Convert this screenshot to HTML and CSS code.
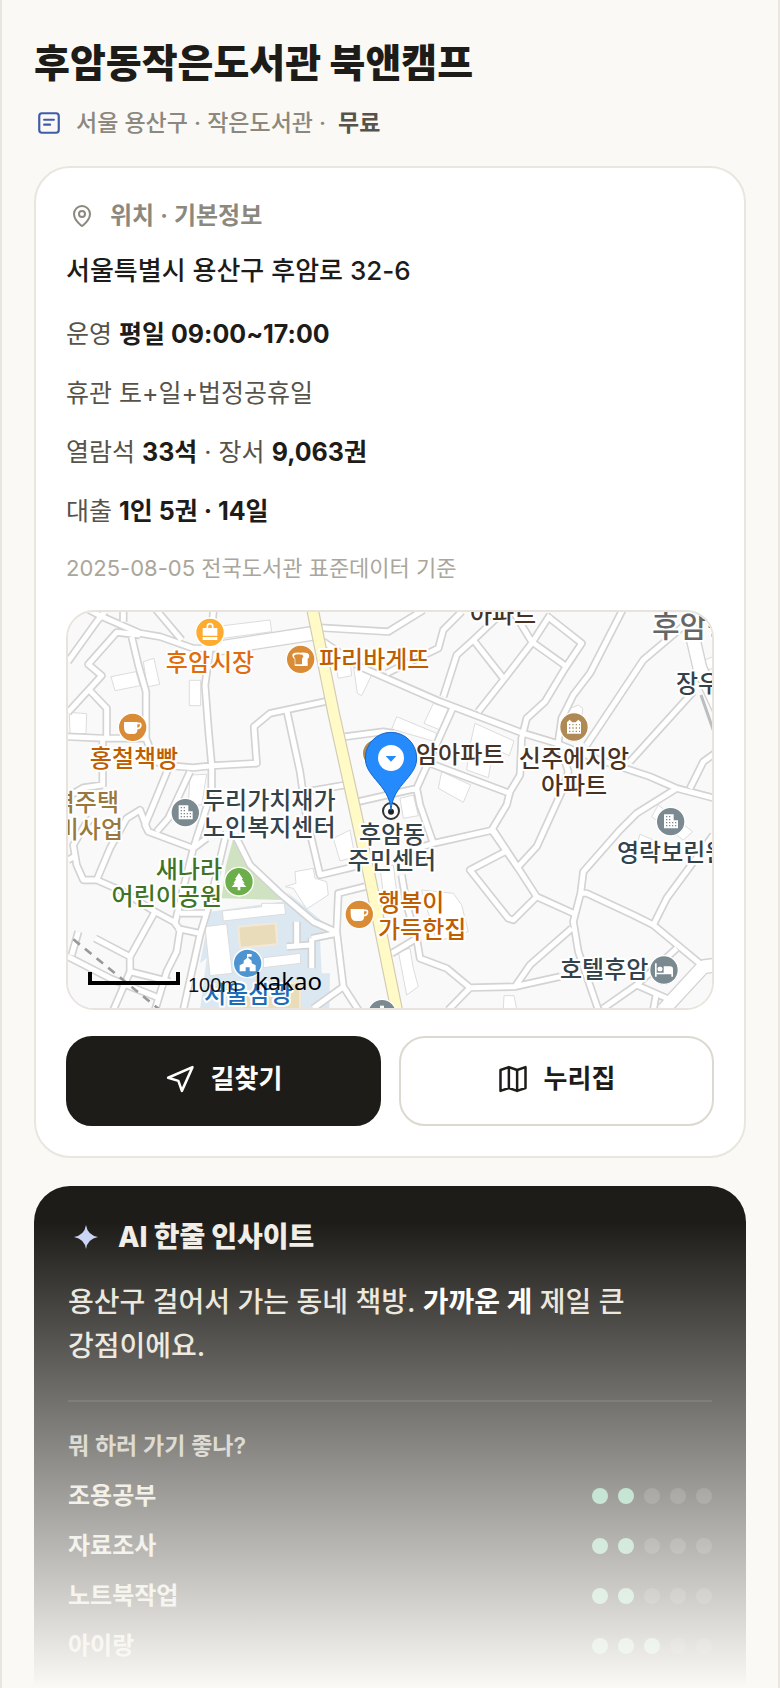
FILE: index.html
```html
<!DOCTYPE html>
<html lang="ko">
  <head>
    <meta charset="UTF-8" />
    <meta name="viewport" content="width=device-width, initial-scale=1.0" />
    <title>후암동작은도서관 북앤캠프</title>
    <link rel="stylesheet" href="styles.css">
  </head>
  <body>
    <main class="page">
      <header class="head">
        <h1 class="title">후암동작은도서관 북앤캠프</h1>
        <div class="meta">
          <span class="meta-icon">
            <svg width="26" height="26" viewBox="0 0 24 24" class="line-icon">
              <rect x="3" y="3" width="18" height="18" rx="2.5" />
              <path d="M7.500 9h9M7.500 13.500h5.500" />
            </svg>
          </span>
          <span>서울 용산구 · 작은도서관 ·</span>
          <b>무료</b>
        </div>
      </header>

      <section class="card">
        <h2 class="card-title">
          <span class="card-icon">
            <svg width="24" height="24" viewBox="0 0 24 24" class="line-icon">
              <path d="M20 10c0 5-5.500 10.200-7.400 11.800a1 1 0 0 1-1.200 0C9.500 20.200 4 15 4 10a8 8 0 0 1 16 0z" />
              <circle cx="12" cy="10" r="3" />
            </svg>
          </span>
          위치 · 기본정보
        </h2>
        <p class="address">서울특별시 용산구 후암로 32-6</p>
        <div class="info">
          <p>운영 <b>평일 09:00~17:00</b></p>
          <p>휴관 토+일+법정공휴일</p>
          <p>열람석 <b>33석</b> · 장서 <b>9,063권</b></p>
          <p>대출 <b>1인 5권 · 14일</b></p>
          <p class="source">2025-08-05 전국도서관 표준데이터 기준</p>
        </div>

        <div class="map">
          <svg class="map-svg" viewBox="0 0 644 396" preserveAspectRatio="xMidYMid slice">
            <defs>
              <g id="roads">
                <path d="M24 170L110 50L135 20M60 0L120 32L240 85L300 95L400 130L470 130M240 90L170 82L85 178L125 212L24 322M88 255L140 310V400M190 20V50M285 10L365 105M460 20L450 130L435 240L445 370L455 480M215 95L235 180L258 260V400L285 470L330 482L400 488L455 482L590 475L582 365L630 325L795 290M24 395L130 400H258M128 400V545M24 575L70 548L128 540" />
                <path d="M325 490L280 600L255 660L265 680L400 730M390 500L325 640L290 680M455 482L455 560L400 730L370 850L345 955L360 975L350 1040L320 1100L285 1215M500 680L450 890L420 990L370 1215M440 700L400 730M95 640L75 660L40 720L50 780L70 825L110 825L190 860L285 920L350 955M24 765L42 755M110 825L150 730L200 640L240 615L265 680M285 920L210 1055V1100L160 1215M105 1000L210 1055M210 1100L330 1130M24 1055L150 1120L300 1180M55 980L35 1050M360 925H440M350 970L420 985" />
                <path d="M780 68L985 80L1090 15M1205 20L1150 75L1135 130L980 205M790 110L900 185L1140 290L1390 385L1490 415L1590 455L1770 515L1850 550L1965 580M1150 275L1190 150L1240 105L1335 15M1240 105L1330 220M1255 320L1330 225L1415 115L1470 30M1360 20L1415 110L1520 185M1460 32L1565 115L1515 190L1455 290L1400 340L1385 400L1380 510L1350 560L1340 600L1295 675M1350 565L1110 475M855 395L970 380L1000 385M895 590L1070 550L1180 305M1070 550L1080 600L1120 715L1300 675L1375 790M680 315L720 500L740 640L780 810L885 785M740 560L855 540" />
                <path d="M1690 10L1590 205L1540 270L1505 340L1495 410L1525 500L1505 560L1430 725L1375 785M1880 55L1750 165L1580 420M1900 260L1710 470M1890 550L1930 470L1965 445M1850 550L1730 625L1680 675L1570 800L1562 865L1540 950L1555 1040L1615 1215M1295 675L1375 790L1430 875L1540 925M1430 875L1360 945L1345 940L1230 795L1335 740M1562 865H1580L1720 930L1780 960L1925 1080M1780 960L1820 880L1960 690M1535 970L1410 1080L1365 1145L1230 1148L1160 1090L1080 1060L1070 1000L1040 900L1025 810M1365 1145L1500 1115M1630 1210L1730 1140L1850 1030M1730 1140L1820 1180M1780 1215L1790 1160M1230 1148L1165 1215M1040 740L1120 715" />
                <path d="M525 690L570 780L660 865L760 950L830 982M915 845L835 865L830 980L850 1145L895 1215M850 1145L760 1210M995 1045L1070 1000M710 950V1020M680 1025L750 1020M755 1000V1090M755 1000L830 985" />
              </g>
            </defs>

            <rect class="ground" width="644" height="396" />

            <!-- streets are kept in their own 3x grid -->
            <g transform="scale(0.33333) translate(-24 -21)">
              <path class="park" d="M520 700L665 885L485 880L498 780z" />
              <path class="school" d="M450 920L700 885L680 860L800 960L780 1000L785 1105H810L808 1215H420L440 1060L420 1075z" />
              <g class="building">
                <path d="M153 215L228 200L240 242L165 257zM250 170L282 160L299 238L262 246zM388 226H422V302H388zM28 322L80 326L78 386H30zM490 62L630 45L635 80L490 100zM390 510L440 508L425 600H385zM435 965L500 957L517 1105L450 1112zM487 918L605 905V895L673 895L677 927L490 948zM610 1058L722 1045V1075L610 1088z" />
                <path d="M825 170L870 165L875 212L835 220zM880 180L935 210L905 272L892 265zM1010 335L1130 385L1125 410L995 372zM1120 295L1165 310L1140 375L1092 355zM1245 355L1362 408L1348 452L1300 430L1285 518L1220 495L1230 420zM1145 500L1232 540L1210 592L1135 550zM1020 580L1060 570L1075 632L1030 640zM820 700L870 675L885 755L840 768zM705 800L760 790L765 820L800 830L805 870L740 912L700 850L675 845L708 835zM960 790L1000 780L1010 860L970 865zM1085 855L1180 865L1205 900L1225 980L1130 1010zM1015 1040L1050 1030L1060 1090L1075 1145L1040 1170zM1520 315L1555 300L1568 310L1565 350L1515 345zM1795 600L1898 680L1870 705L1775 635zM1740 688L1780 705L1770 740L1730 720zM1332 1172H1362L1370 1212H1330zM1920 170L1960 155V190L1935 195z" />
              </g>
              <path class="court" d="M535 965L647 955L652 1018L540 1028zM545 1160L720 1130V1215H545z" />
              <path class="edge wide" d="M470 130L790 80M1885 40L1920 190L1990 340M1810 1215L1930 1085L1970 1080" />
              <use href="#roads" class="edge" />
              <use href="#roads" class="lane" />
              <path class="lane wide" d="M470 130L790 80M1885 40L1920 190L1990 340M1810 1215L1930 1085L1970 1080" />
              <path class="under" d="M1923 270L1965 390" />
              <path class="rail" d="M40 1003L300 1215" />
              <path class="avenue-edge" d="M757 10L822 330L882 600L932 830L1010 1215" />
              <path class="avenue" d="M757 10L822 330L882 600L932 830L1010 1215" />

              <g class="poi">
                <g transform="translate(450 82)">
                  <circle r="43" fill="#ffab30" />
                  <path fill="#fff" d="M-22-13H22V10H-22zM-22 14H22V23H-22z" />
                  <path class="poi-line" d="M-8-12V-18A8 8 0 0 1 8-18V-12" />
                </g>
                <g transform="translate(218 367)">
                  <circle r="43" fill="#d98b35" />
                  <path fill="#fff" d="M-26-16H14V8Q14 20 2 20H-10Q-26 20-26-2z" />
                  <path class="poi-line" d="M12-12H20Q26-12 24-3Q22 4 12 4" />
                </g>
                <g transform="translate(722 163)">
                  <circle r="43" fill="#d98b35" />
                  <path fill="#fff" d="M-25-14Q-22-22 0-20Q26-22 26-10Q26-4 21-2V20H-18V-2Q-25-4-25-14z" />
                  <path fill="#d98b35" d="M-20-8Q-20-15-6-15Q8-15 8-8L4-2V15H-16V-2z" />
                </g>
                <g transform="translate(898 928)">
                  <circle r="43" fill="#d98b35" />
                  <path fill="#fff" d="M-26-16H14V8Q14 20 2 20H-10Q-26 20-26-2z" />
                  <path class="poi-line" d="M12-12H20Q26-12 24-3Q22 4 12 4" />
                </g>
                <g transform="translate(950 445)"><circle r="43" fill="#b08a54" /></g>
                <g transform="translate(1542 366)">
                  <circle r="43" fill="#b08a54" />
                  <path fill="#fff" d="M-21 20V-14L-13-22L-5-14H5L13-22L21-14V20z" />
                  <path stroke="#b08a54" stroke-width="4" stroke-dasharray="4 6" d="M-15-7H18M-15 3H18M-15 13H18" />
                </g>
                <g transform="translate(376 623)">
                  <circle r="43" fill="#7b8990" />
                  <path fill="#fff" d="M-20-22H9V-4H22V20H-20z" />
                  <path stroke="#7b8990" stroke-width="4" stroke-dasharray="4 5" d="M-14-15H4M-14-6H4M-14 3H18M-14 12H18" />
                </g>
                <g transform="translate(1832 650)">
                  <circle r="43" fill="#7b8990" />
                  <path fill="#fff" d="M-20-22H9V-4H22V20H-20z" />
                  <path stroke="#7b8990" stroke-width="4" stroke-dasharray="4 5" d="M-14-15H4M-14-6H4M-14 3H18M-14 12H18" />
                </g>
                <g transform="translate(537 830)">
                  <circle r="43" fill="#6cae4a" />
                  <path fill="#fff" d="M0-26L12-8H8L17 5H12L22 16H4V26H-4V16H-22L-12 5H-17L-8-8H-12z" />
                </g>
                <g transform="translate(563 1075)">
                  <circle r="43" fill="#4d94d0" />
                  <path fill="#fff" d="M-24 24V6L-12 0V-8L-2-16V-28H12V-20H2V-16L12-8V0L24 6V24H6V12H-6V24z" />
                </g>
                <g transform="translate(1812 1095)">
                  <circle r="43" fill="#7b8990" />
                  <path fill="#fff" d="M-27-20H-22V20H-27zM-22 8H27V20H22V13H-22z" />
                  <path fill="#fff" d="M-1-11H18Q27-11 27-3V10H-1z" />
                  <rect x="-19" y="-10" width="14" height="14" rx="5" fill="#fff" />
                </g>
                <g transform="translate(966 1226)">
                  <circle r="43" fill="#7b8990" />
                  <path fill="#fff" d="M-6-24H6V0H-6z" />
                </g>
              </g>
            </g>

            <g class="label">
              <g class="shop" text-anchor="middle">
                <text class="market" x="142" y="59">후암시장</text>
                <text x="66" y="155">홍철책빵</text>
              </g>
              <g class="shop">
                <text x="251" y="56">파리바게뜨</text>
                <text x="310" y="299">행복이</text>
                <text x="310" y="326">가득한집</text>
              </g>
              <g class="apart">
                <text x="435" y="11" text-anchor="middle">아파트</text>
                <text x="348" y="151">암아파트</text>
                <text x="506" y="155" text-anchor="middle">신주에지앙</text>
                <text x="506" y="182" text-anchor="middle">아파트</text>
              </g>
              <g class="estate" text-anchor="end">
                <text x="51" y="199">역주택</text>
                <text x="55" y="226">비사업</text>
              </g>
              <g class="place">
                <text x="608" y="80">장우</text>
                <text x="135" y="197">두리가치재가</text>
                <text x="135" y="224">노인복지센터</text>
                <text x="324" y="231" text-anchor="middle">후암동</text>
                <text x="324" y="257" text-anchor="middle">주민센터</text>
                <text x="549" y="249">영락보린원</text>
                <text x="492" y="366">호텔후암</text>
              </g>
              <text class="district" x="584" y="25">후암동</text>
              <g class="green" text-anchor="end">
                <text x="154" y="266">새나라</text>
                <text x="154" y="293">어린이공원</text>
              </g>
              <text class="blue" x="136" y="391">서울삼광</text>
            </g>

            <!-- marker -->
            <g transform="scale(0.33333) translate(969 -21)">
              <circle cy="618" r="24" fill="#fff" fill-opacity=".7" stroke="#333" stroke-width="6" />
              <circle cy="620" r="9" fill="#222" />
              <path fill="#258afc" stroke="#1767c8" stroke-width="3" d="M0 616C-3 575-22 552-46 524C-66 500-77 484-77 459A77 77 0 0 1 77 459C77 484 66 500 46 524C22 552 3 575 0 616z" />
              <circle cy="459" r="39" fill="#fff" />
              <path fill="#258afc" d="M-16 453H16L0 470z" />
            </g>

            <path class="scale" d="M22 360v11h88v-11" />
            <text class="scale-text" x="120" y="380">100m</text>
            <text class="kakao" x="187" y="378">kakao</text>
          </svg>
        </div>

        <div class="actions">
          <button type="button" class="btn btn-dark">
            <svg width="30" height="30" viewBox="0 0 24 24" class="line-icon">
              <path d="M22 2.500L2.500 11L10.700 13.500L13.500 21.500z" />
            </svg>
            길찾기
          </button>
          <button type="button" class="btn">
            <svg width="30" height="30" viewBox="0 0 24 24" class="line-icon">
              <path d="M2 4.800L8.700 2.500L15.300 4.800L22 2.500V19.200L15.300 21.500L8.700 19.200L2 21.500zM8.700 2.500V19.200M15.300 4.800V21.500" />
            </svg>
            누리집
          </button>
        </div>
      </section>

      <section class="insight">
        <h2 class="insight-title">
          <span class="spark">
            <svg width="24" height="24" viewBox="0 0 24 24">
              <path d="M12 0Q13.500 10 24 12Q13.500 14 12 24Q10.500 14 0 12Q10.500 10 12 0z" />
            </svg>
          </span>
          AI 한줄 인사이트
        </h2>
        <p class="insight-text">용산구 걸어서 가는 동네 책방. <b>가까운 게</b> 제일 큰 강점이에요.</p>
        <div class="scores">
          <h3 class="scores-title">뭐 하러 가기 좋나?</h3>
          <ul class="list">
            <li class="row">조용공부
              <span class="dots"><i class="on"></i><i class="on"></i><i></i><i></i><i></i></span>
            </li>
            <li class="row">자료조사
              <span class="dots"><i class="on"></i><i class="on"></i><i></i><i></i><i></i></span>
            </li>
            <li class="row">노트북작업
              <span class="dots"><i class="on"></i><i class="on"></i><i></i><i></i><i></i></span>
            </li>
            <li class="row">아이랑
              <span class="dots"><i class="on"></i><i class="on"></i><i class="on"></i><i></i><i></i></span>
            </li>
          </ul>
        </div>
      </section>
      <div class="fade"></div>
    </main>
  </body>
</html>
```

FILE: styles.css
```css
* {
  margin: 0;
  padding: 0;
  box-sizing: border-box;
}
body {
  background: #faf9f5;
  color: #1e1c18;
  font-family: Inter, "Noto Sans CJK KR", sans-serif;
  font-size: 24px;
}
.page {
  position: relative;
  min-height: 100vh;
  padding: 38px 32px 0;
  border: solid #e8e6df;
  border-width: 0 2px;
}
.line-icon {
  fill: none;
  stroke: currentColor;
  stroke-width: 2;
  stroke-linecap: round;
  stroke-linejoin: round;
}

.title {
  font-size: 39px;
  font-weight: 800;
  line-height: 50px;
}
.meta {
  display: flex;
  align-items: center;
  gap: 12px;
  margin-top: 17px;
  font-size: 23px;
  font-weight: 500;
  line-height: 36px;
  color: #8c887e;
}
.meta b {
  font-weight: 600;
  color: #57534a;
}
.meta-icon,
.card-icon,
.spark {
  display: flex;
  justify-content: center;
  width: 30px;
}
.meta-icon {
  color: #3f5cab;
}

.card {
  margin-top: 25px;
  padding: 30px;
  border: 2px solid #e8e6df;
  border-radius: 36px;
  background: #fff;
}
.card-title {
  display: flex;
  align-items: center;
  gap: 12px;
  font-size: 24px;
  font-weight: 600;
  line-height: 36px;
  color: #8c887e;
}
.card-icon {
  width: 32px;
}
.address {
  margin-top: 16px;
  font-size: 26px;
  font-weight: 500;
  line-height: 42px;
}
.info {
  display: flex;
  flex-direction: column;
  gap: 18px;
  margin-top: 22px;
  font-size: 25px;
  line-height: 41px;
  color: #57534a;
}
.info b {
  font-weight: 700;
  color: #1e1c18;
}
.info .source {
  font-size: 22px;
  line-height: 36px;
  color: #aaa69b;
}

.map {
  margin-top: 24px;
  height: 400px;
  border: 2px solid #e8e4dd;
  border-radius: 28px;
  overflow: hidden;
}
.map-svg {
  display: block;
  width: 100%;
  height: 100%;
  fill: none;
}
.ground {
  fill: #f9f9f9;
}
.park {
  fill: #cfe3c2;
}
.school {
  fill: #dce8f1;
}
.building {
  fill: #fff;
  stroke: #dcdcdc;
  stroke-width: 3;
}
.court {
  fill: #e9dcbb;
  stroke: #f4e8d4;
  stroke-width: 6;
}
.edge,
.lane {
  stroke: #d3d3d3;
  stroke-width: 25;
  stroke-linejoin: round;
}
.lane {
  stroke: #fff;
  stroke-width: 15;
}
.edge.wide {
  stroke-width: 46;
}
.lane.wide {
  stroke-width: 38;
}
.under {
  stroke: #bbbdbe;
  stroke-width: 9;
}
.rail {
  stroke: #999;
  stroke-width: 8;
  stroke-dasharray: 25 20;
}
.avenue-edge {
  stroke: #d2cbb4;
  stroke-width: 38;
}
.avenue {
  stroke: #fffac6;
  stroke-width: 31;
}
.poi circle {
  stroke: #fff;
  stroke-width: 4;
}
.poi-line {
  stroke: #fff;
  stroke-width: 5;
}
.label {
  font-family: "Noto Sans CJK KR", sans-serif;
  font-size: 24px;
  font-weight: 500;
  stroke: #fff;
  stroke-width: 4;
  stroke-linejoin: round;
  paint-order: stroke;
}
.shop {
  fill: #bf5e00;
}
.market {
  fill: #e06c0c;
}
.apart {
  fill: #4a3222;
}
.estate {
  fill: #98783c;
}
.place {
  fill: #34434a;
}
.district {
  font-size: 30px;
  fill: #666;
}
.green {
  fill: #3f7424;
}
.blue {
  fill: #1d6cb8;
}
.scale {
  stroke: #000;
  stroke-width: 4;
}
.scale-text {
  font-family: "Liberation Sans", sans-serif;
  font-size: 20px;
  fill: #111;
}
.kakao {
  font-family: "Noto Sans", sans-serif;
  font-size: 24px;
  fill: #000;
}

.actions {
  display: flex;
  gap: 18px;
  margin-top: 26px;
}
.btn {
  display: flex;
  flex: 1;
  align-items: center;
  justify-content: center;
  gap: 16px;
  height: 90px;
  padding-bottom: 4px;
  border: 2px solid #dcd9d0;
  border-radius: 26px;
  background: #fff;
  color: #1e1c18;
  font-family: inherit;
  font-size: 26px;
  font-weight: 700;
  line-height: 36px;
  cursor: pointer;
}
.btn-dark {
  border-color: #1e1c18;
  background: #1e1c18;
  color: #fff;
}

.insight {
  margin-top: 28px;
  padding: 34px 34px 24px;
  border-radius: 36px 36px 0 0;
  background: #1e1c18;
  color: #f1eee7;
}
.insight-title {
  display: flex;
  align-items: center;
  gap: 14px;
  font-size: 28px;
  font-weight: 800;
  line-height: 34px;
}
.spark {
  width: 36px;
  fill: #c9d4f4;
}
.insight-text {
  margin-top: 26px;
  font-size: 28px;
  font-weight: 500;
  line-height: 44px;
  color: #e8e4da;
  word-break: keep-all;
}
.insight-text b {
  color: #fff;
}
.scores {
  margin-top: 32px;
  padding-top: 27px;
  border-top: 2px solid #34322e;
}
.scores-title {
  font-size: 23px;
  font-weight: 600;
  line-height: 34px;
  color: #c4c0b5;
}
.list {
  display: flex;
  flex-direction: column;
  gap: 18px;
  margin-top: 17px;
  list-style: none;
}
.row {
  display: flex;
  align-items: center;
  justify-content: space-between;
  font-weight: 600;
  line-height: 32px;
  color: #e8e4da;
}
.dots {
  display: flex;
  gap: 10px;
}
.dots i {
  width: 16px;
  height: 16px;
  border-radius: 50%;
  background: #3e3c38;
}
.dots .on {
  background: #7fc8a4;
}

.fade {
  position: absolute;
  left: 0;
  right: 0;
  bottom: 0;
  height: 466px;
  background: linear-gradient(rgba(250, 249, 245, 0), #faf9f5);
  pointer-events: none;
}
```
